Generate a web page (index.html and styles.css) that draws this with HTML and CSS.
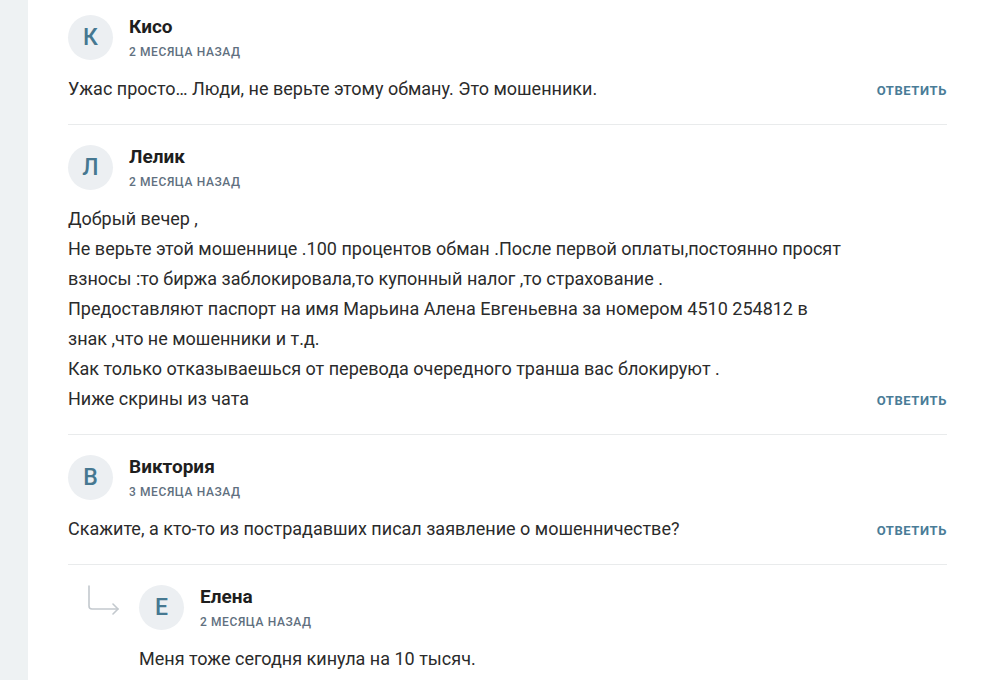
FILE: index.html
```html
<!DOCTYPE html>
<html lang="ru">
<head>
<meta charset="utf-8">
<link rel="stylesheet" href="styles.css">
</head>
<body>
<div class="page">
  <aside class="strip"></aside>
  <main class="comments">
    <div class="comment first">
      <div class="head">
        <div class="avatar">К</div>
        <div class="meta">
          <div class="name">Кисо</div>
          <div class="date">2 месяца назад</div>
        </div>
      </div>
      <div class="body">
        <p class="text">Ужас просто… Люди, не верьте этому обману. Это мошенники.</p>
        <a class="reply">Ответить</a>
      </div>
    </div>
    <div class="comment">
      <div class="head">
        <div class="avatar">Л</div>
        <div class="meta">
          <div class="name">Лелик</div>
          <div class="date">2 месяца назад</div>
        </div>
      </div>
      <div class="body">
        <p class="text">Добрый вечер ,<br>Не верьте этой мошеннице .100 процентов обман .После первой оплаты,постоянно просят<br>взносы :то биржа заблокировала,то купонный налог ,то страхование .<br>Предоставляют паспорт на имя Марьина Алена Евгеньевна за номером 4510 254812 в<br>знак ,что не мошенники и т.д.<br>Как только отказываешься от перевода очередного транша вас блокируют .<br>Ниже скрины из чата</p>
        <a class="reply">Ответить</a>
      </div>
    </div>
    <div class="comment">
      <div class="head">
        <div class="avatar">В</div>
        <div class="meta">
          <div class="name">Виктория</div>
          <div class="date">3 месяца назад</div>
        </div>
      </div>
      <div class="body">
        <p class="text">Скажите, а кто-то из пострадавших писал заявление о мошенничестве?</p>
        <a class="reply">Ответить</a>
      </div>
    </div>
    <div class="comment nested">
      <div class="arrow">
        <svg width="34" height="30" viewBox="0 0 34 30" fill="none" stroke="#c3c9ce" stroke-width="1.6" stroke-linecap="round" stroke-linejoin="round">
          <path d="M1 1 V21 Q1 24 4 24 H30"/>
          <path d="M25 19 L30 24 L25 29"/>
        </svg>
      </div>
      <div class="inner">
        <div class="head">
          <div class="avatar">Е</div>
          <div class="meta">
            <div class="name">Елена</div>
            <div class="date">2 месяца назад</div>
          </div>
        </div>
        <div class="body">
          <p class="text">Меня тоже сегодня кинула на 10 тысяч.</p>
        </div>
      </div>
    </div>
  </main>
</div>
</body>
</html>
```
FILE: styles.css
```css
html, body {
  margin: 0;
  padding: 0;
  background: #ffffff;
}
body {
  font-family: Roboto, "Liberation Sans", Arial, sans-serif;
  color: #333333;
  overflow: hidden;
  height: 680px;
}
.page {
  display: flex;
  min-height: 680px;
}
.strip {
  width: 28px;
  flex: none;
  background: #eef2f3;
}
.comments {
  flex: 1;
  padding: 0 35px 0 40px;
}
.comment {
  padding: 20px 0;
  border-bottom: 1px solid #e9ebec;
}
.comment.first {
  padding-top: 15px;
}
.comment.nested {
  display: flex;
  border-bottom: none;
}
.arrow {
  width: 71px;
  flex: none;
  padding-left: 20px;
  box-sizing: border-box;
}
.arrow svg {
  display: block;
}
.inner {
  flex: 1;
}
.head {
  display: flex;
  gap: 16px;
  height: 45px;
}
.avatar {
  width: 45px;
  height: 45px;
  border-radius: 50%;
  background: #eceff2;
  color: #467891;
  font-size: 23px;
  font-weight: 500;
  display: flex;
  align-items: center;
  justify-content: center;
  flex: none;
}
.meta {
  padding-top: 1px;
}
.name {
  font-size: 19px;
  line-height: 22px;
  font-weight: 700;
  color: #1e1e1e;
}
.date {
  margin-top: 6px;
  font-size: 12px;
  line-height: 16px;
  font-weight: 500;
  text-transform: uppercase;
  letter-spacing: 0.6px;
  color: #5f7080;
}
.body {
  display: flex;
  align-items: flex-end;
  justify-content: space-between;
  margin-top: 14px;
}
.text {
  margin: 0;
  font-size: 18px;
  line-height: 30px;
  color: #2b2b2b;
}
.reply {
  font-size: 13px;
  line-height: 30px;
  font-weight: 700;
  text-transform: uppercase;
  letter-spacing: 0.6px;
  color: #4a7c97;
  cursor: pointer;
  flex: none;
  position: relative;
  top: 2px;
}
```
